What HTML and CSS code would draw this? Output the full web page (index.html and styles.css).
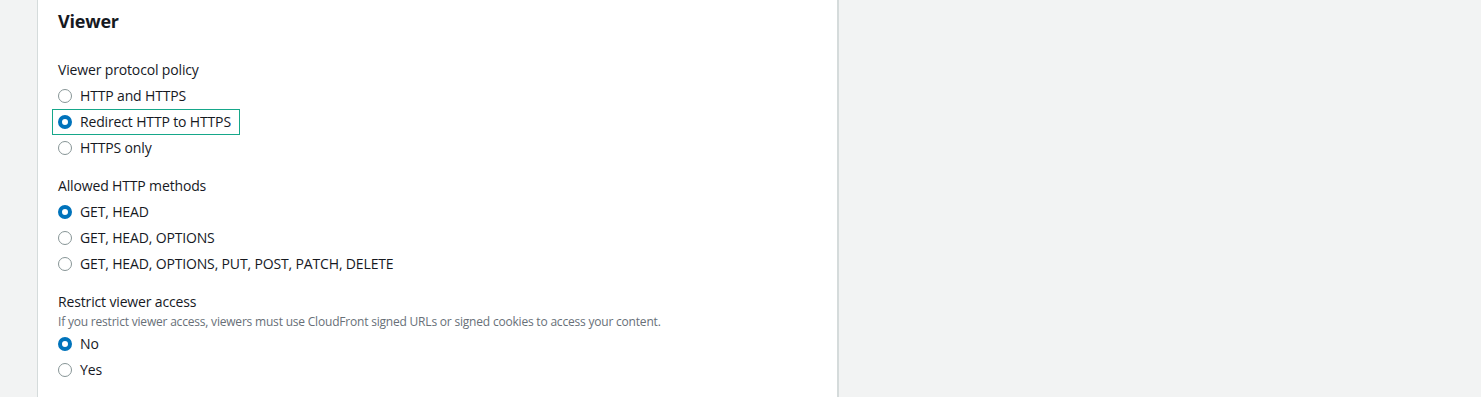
FILE: index.html
```html
<!DOCTYPE html>
<html lang="en">
<head>
  <meta charset="UTF-8" />
  <title>Viewer</title>
  <link rel="stylesheet" href="styles.css">
</head>
<body>

  <div class="page">
    <section class="panel">
      <h2>Viewer</h2>

      <div class="field">
        <div class="label">Viewer protocol policy</div>
        <div class="radio"><span class="dot"></span>HTTP and HTTPS</div>
        <div class="radio focused"><span class="dot checked"></span>Redirect HTTP to HTTPS</div>
        <div class="radio"><span class="dot"></span>HTTPS only</div>
      </div>

      <div class="field">
        <div class="label">Allowed HTTP methods</div>
        <div class="radio"><span class="dot checked"></span>GET, HEAD</div>
        <div class="radio"><span class="dot"></span>GET, HEAD, OPTIONS</div>
        <div class="radio"><span class="dot"></span>GET, HEAD, OPTIONS, PUT, POST, PATCH, DELETE</div>
      </div>

      <div class="field">
        <div class="label">Restrict viewer access</div>
        <div class="hint">If you restrict viewer access, viewers must use CloudFront signed URLs or signed cookies to access your content.</div>
        <div class="radio"><span class="dot checked"></span>No</div>
        <div class="radio"><span class="dot"></span>Yes</div>
      </div>
    </section>
  </div>

</body>
</html>
```

FILE: styles.css
```css
body {
  margin: 0;
  font-family: "Open Sans", "Liberation Sans", Arial, sans-serif;
  background: #f2f3f3;
  color: #16191f;
  font-size: 14px;
  letter-spacing: -0.15px;
}

.page {
  padding-left: 37px;
}

/* Белая панель */
.panel {
  width: 802px;
  height: 397px;
  box-sizing: border-box;
  background: #fff;
  border-left: 1px solid #d5dbdb;
  border-right: 2px solid #d5dbdb;
  padding: 10px 20px 0 20px;
}

.panel h2 {
  margin: 0 0 27px 0;
  font-size: 18px;
  font-weight: 700;
  line-height: 22px;
  letter-spacing: -0.2px;
}

.field {
  margin-bottom: 14px;
}

.label {
  line-height: 22px;
  margin-bottom: 2px;
}

.hint {
  font-size: 12px;
  color: #687078;
  line-height: 16px;
  letter-spacing: -0.2px;
  margin-top: -1px;
  margin-bottom: 1px;
}

.radio {
  display: flex;
  align-items: center;
  gap: 8px;
  height: 26px;
  line-height: 22px;
  box-sizing: border-box;
}

.radio.focused {
  width: 186px;
  margin-left: -5px;
  padding-left: 5px;
  height: 24px;
  margin-top: 1px;
  margin-bottom: 1px;
  outline: 1px solid #16a78a;
}

.dot {
  width: 14px;
  height: 14px;
  box-sizing: border-box;
  border: 1.5px solid #879596;
  border-radius: 50%;
  flex-shrink: 0;
}

.dot.checked {
  border: 4px solid #0073bb;
  background: #fff;
}
```
